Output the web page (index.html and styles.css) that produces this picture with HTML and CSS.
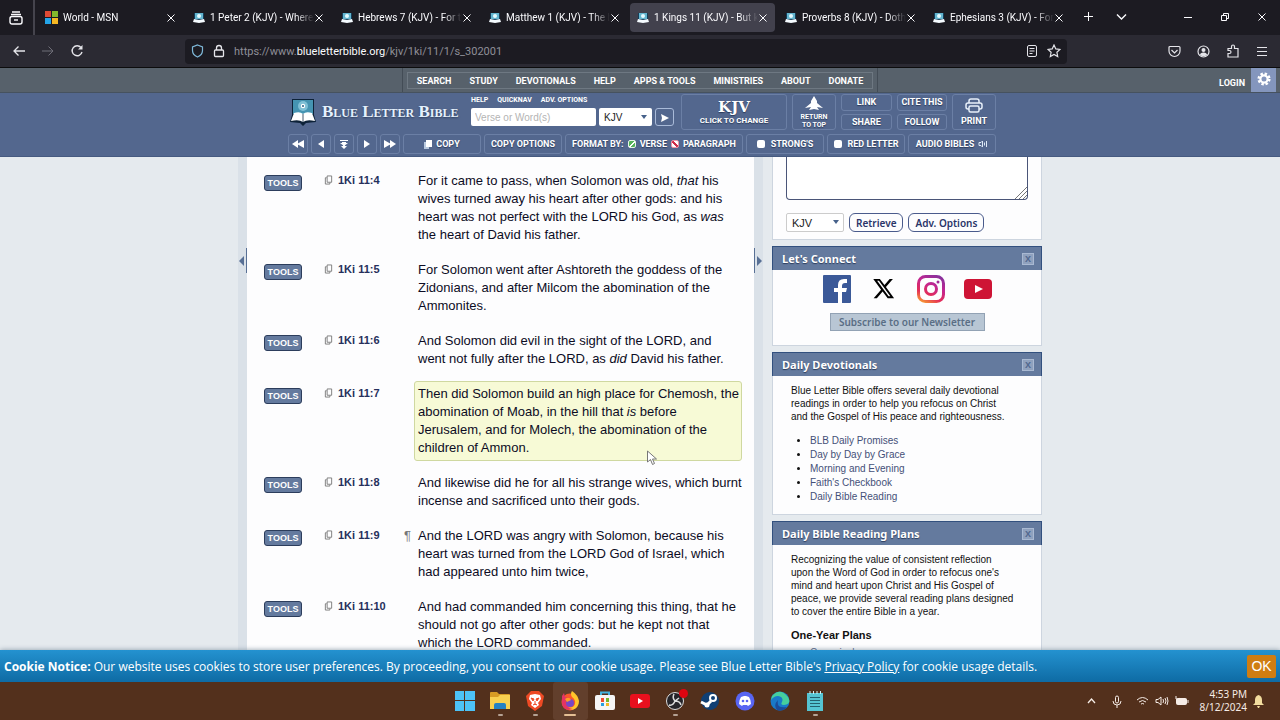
FILE: index.html
```
<!DOCTYPE html>
<html lang="en">
<head>
    <meta charset="utf-8">
    <title>1 Kings 11 (KJV)</title>
    <link rel="stylesheet" href="styles.css">
</head>
<body>
    <svg class="defs" aria-hidden="true">
        <symbol id="favicon" viewBox="0 0 12 12"><path fill="#153d58" d="M1 1h10v7H1z"/><path fill="#63b5cf" d="M2 1h8v6H2z"/><circle cx="6" cy="4" r="2" fill="#e5fbff"/><path fill="#f5fbff" d="M1 7l5 1 5-1 1 3-6 1-6-1z"/></symbol>
        <symbol id="close" viewBox="0 0 10 10"><path d="M1.500 1.500l7 7m0-7l-7 7" fill="none" stroke="currentColor"/></symbol>
        <symbol id="copy" viewBox="0 0 10 10"><path d="M3.500.500h5v7h-5zM3 2.500H1.500v7h5V8" fill="none" stroke="currentColor"/></symbol>
    </svg>

    <div class="tabbar">
        <button class="view-btn" aria-label="Firefox View"><svg width="14" height="14" viewBox="0 0 14 14" fill="none" stroke="currentColor" stroke-width="1.400"><path d="M3 1h8M2 3.500h10"/><rect x="1" y="5.500" width="12" height="7.500" rx="2"/><path d="M5 9h4"/></svg></button>
        <div class="tabs">
            <button class="tab"><svg width="13" height="13" viewBox="0 0 13 13"><path fill="#dd4b35" d="M0 0h6v6H0z"/><path fill="#83b92c" d="M7 0h6v6H7z"/><path fill="#24a4e8" d="M0 7h6v6H0z"/><path fill="#f5b824" d="M7 7h6v6H7z"/></svg><span>World - MSN</span><svg class="x"><use href="#close"/></svg></button>
            <button class="tab"><svg class="fav"><use href="#favicon"/></svg><span>1 Peter 2 (KJV) - Wheref</span><svg class="x"><use href="#close"/></svg></button>
            <button class="tab"><svg class="fav"><use href="#favicon"/></svg><span>Hebrews 7 (KJV) - For th</span><svg class="x"><use href="#close"/></svg></button>
            <button class="tab"><svg class="fav"><use href="#favicon"/></svg><span>Matthew 1 (KJV) - The b</span><svg class="x"><use href="#close"/></svg></button>
            <button class="tab active"><svg class="fav"><use href="#favicon"/></svg><span>1 Kings 11 (KJV) - But ki</span><svg class="x"><use href="#close"/></svg></button>
            <button class="tab"><svg class="fav"><use href="#favicon"/></svg><span>Proverbs 8 (KJV) - Doth</span><svg class="x"><use href="#close"/></svg></button>
            <button class="tab"><svg class="fav"><use href="#favicon"/></svg><span>Ephesians 3 (KJV) - For t</span><svg class="x"><use href="#close"/></svg></button>
        </div>
        <button class="tab-tool" aria-label="New tab"><svg width="11" height="11" viewBox="0 0 11 11"><path d="M5.500 1v9M1 5.500h9" stroke="currentColor"/></svg></button>
        <button class="tab-tool" aria-label="List tabs"><svg width="11" height="11" viewBox="0 0 11 11"><path d="M1 3.500L5.500 8 10 3.500" fill="none" stroke="currentColor" stroke-width="1.400"/></svg></button>
        <div class="window-btns">
            <button aria-label="Minimize"><svg width="10" height="10"><path d="M1 5.500h8" stroke="currentColor"/></svg></button>
            <button aria-label="Restore"><svg width="10" height="10" fill="none" stroke="currentColor"><path d="M1.500 3.500h5v5h-5zM3.500 3V1.500h5v5H7"/></svg></button>
            <button aria-label="Close"><svg width="10" height="10"><use href="#close"/></svg></button>
        </div>
    </div>

    <div class="navbar">
        <div class="nav-btns">
            <button aria-label="Back"><svg width="14" height="14" viewBox="0 0 14 14" fill="none" stroke="currentColor" stroke-width="1.300"><path d="M13 7H2M6.500 2.500L2 7l4.500 4.500"/></svg></button>
            <button aria-label="Forward" disabled><svg width="14" height="14" viewBox="0 0 14 14" fill="none" stroke="currentColor"><path d="M1 7h11M7.500 2.500L12 7l-4.500 4.500"/></svg></button>
            <button aria-label="Reload"><svg width="14" height="14" viewBox="0 0 14 14" fill="none" stroke="currentColor" stroke-width="1.400"><path d="M11 3.500A5 5 0 1 0 12 8"/><path d="M12.500 1v4.500H8z" fill="currentColor" stroke="none"/></svg></button>
        </div>
        <div class="urlbar">
            <svg width="13" height="14" viewBox="0 0 13 14" fill="none" stroke="#7eb8d8" stroke-width="1.200"><path d="M6.500 1l5 2v3.500c0 3-2 5.200-5 6.500-3-1.300-5-3.500-5-6.500V3z"/></svg>
            <svg width="12" height="14" viewBox="0 0 12 14" fill="none" stroke="#e5e5ea" stroke-width="1.300"><rect x="1.500" y="6" width="9" height="6.500" rx="1"/><path d="M3.500 6V4a2.500 2.500 0 0 1 5 0v2"/></svg>
            <div class="url" role="textbox" aria-label="Address" contenteditable="true" spellcheck="false">https://www.<b>blueletterbible.org</b>/kjv/1ki/11/1/s_302001</div>
            <svg width="12" height="14" viewBox="0 0 12 14" fill="none" stroke="#e5e5ea"><rect x="1.500" y="1.500" width="9" height="11" rx="1.500"/><path d="M3.500 4.500h5M3.500 7h5M3.500 9.500h3"/></svg>
            <svg width="14" height="14" viewBox="0 0 14 14" fill="none" stroke="#e5e5ea" stroke-width="1.200"><path d="M7 1l1.800 3.900 4.200.5-3.100 2.900.8 4.200L7 10.400l-3.700 2.100.8-4.200L1 5.400l4.200-.5z"/></svg>
        </div>
        <div class="nav-tools">
            <button aria-label="Pocket"><svg width="13" height="13" viewBox="0 0 13 13" fill="none" stroke="currentColor" stroke-width="1.200"><path d="M1 2.500q0-1 1-1h9q1 0 1 1V6a5.500 5.500 0 0 1-11 0zM3.500 5l3 3 3-3"/></svg></button>
            <button aria-label="Account"><svg width="13" height="13" viewBox="0 0 13 13"><circle cx="6.500" cy="6.500" r="5.500" fill="none" stroke="currentColor" stroke-width="1.200"/><circle cx="6.500" cy="5" r="2" fill="currentColor"/><path d="M3 10q0-2.500 3.500-2.500T10 10q-3.500 2.500-7 0" fill="currentColor"/></svg></button>
            <button aria-label="Extensions"><svg width="13" height="14" viewBox="0 0 13 14" fill="none" stroke="currentColor" stroke-width="1.200"><path d="M2 13V9.500h1.500a1.300 1.300 0 0 0 0-3H2V4.500h3.500V2.500a1.500 1.500 0 0 1 3 0v2H12V13z"/></svg></button>
            <button aria-label="Menu"><svg width="12" height="12"><path d="M1 2.500h10M1 6.500h10M1 10.500h10" stroke="currentColor"/></svg></button>
        </div>
    </div>

    <nav class="site-menu">
        <div class="menu-frame">
            <div class="menu">
                <a href="#">SEARCH</a><a href="#">STUDY</a><a href="#">DEVOTIONALS</a><a href="#">HELP</a><a href="#">APPS &amp; TOOLS</a><a href="#">MINISTRIES</a><a href="#">ABOUT</a><a href="#">DONATE</a>
            </div>
        </div>
        <div class="account">
            <a href="#">LOGIN</a>
            <button class="gear" aria-label="Settings"><svg width="14" height="14" viewBox="0 0 14 14"><circle cx="7" cy="7" r="5.300" fill="none" stroke="#fff" stroke-width="2.500" stroke-dasharray="2.400 1.760"/><circle cx="7" cy="7" r="3.600" fill="none" stroke="#fff" stroke-width="2.200"/></svg></button>
        </div>
    </nav>

    <header class="header">
        <div class="header-top">
            <a class="logo" href="#">
                <svg width="26" height="28" viewBox="0 0 26 28"><path fill="#0d2238" d="M2 1h22v16l2 7-10 1-3 3-3-3-10-1 2-7z"/><path fill="#4594b2" d="M3 2h20v14H3z"/><circle cx="13" cy="8" r="5" fill="#7fc0d6"/><circle cx="13" cy="8" r="2.200" fill="#fff"/><circle cx="13" cy="8" r="1" fill="#245f85"/><path fill="#fff" d="M4 15q6-2 9 1 3-3 9-1l3 8q-8-2-12 1-4-3-12-1z"/><path d="M13 16v8" stroke="#44586c"/></svg>
                <span>Blue Letter Bible</span>
            </a>
            <form class="search">
                <div class="search-links"><a href="#">HELP</a><a href="#">QUICKNAV</a><a href="#">ADV. OPTIONS</a></div>
                <div class="search-row">
                    <input type="text" aria-label="Verse or words" placeholder="Verse or Word(s)">
                    <span class="select-wrap"><select aria-label="Version"><option>KJV</option></select></span>
                    <button class="go" type="button" aria-label="Go"><svg width="8" height="8"><path fill="#fff" d="M0 0l8 4-8 4 1-4z"/></svg></button>
                </div>
            </form>
            <button class="hbtn version"><strong>KJV</strong>CLICK TO CHANGE</button>
            <button class="hbtn return"><svg width="18" height="15" viewBox="0 0 18 15"><path fill="#fff" d="M9 0l3 5v2l6 5-6-1 2 3-5-1-5 1 2-3-6 1 6-5V5z"/></svg>RETURN<br>TO TOP</button>
            <div class="stack link"><button class="hbtn">LINK</button><button class="hbtn">SHARE</button></div>
            <div class="stack cite"><button class="hbtn">CITE THIS</button><button class="hbtn">FOLLOW</button></div>
            <button class="hbtn print"><svg width="18" height="16" viewBox="0 0 18 16" fill="none" stroke="#e8f0fa" stroke-width="1.500"><path d="M4 5V3q0-2 2-2h6q2 0 2 2v2M4 11H3q-2 0-2-2V7q0-2 2-2h12q2 0 2 2v2q0 2-2 2h-1"/><rect x="4" y="8" width="10" height="6" rx="1.500"/></svg>PRINT</button>
        </div>
        <div class="header-bottom">
            <button class="hbtn" aria-label="Previous book"><svg width="12" height="8"><path fill="#fff" d="M6 0v8L0 4zM12 0v8L5 4z"/></svg></button>
            <button class="hbtn" aria-label="Previous chapter"><svg width="6" height="8"><path fill="#fff" d="M6 0v8L0 4z"/></svg></button>
            <button class="hbtn" aria-label="Choose chapter"><svg width="8" height="9"><path fill="#fff" d="M0 0h8v1H0zM2 2h4v1h2L4 6 0 3h2zM3 5h2v1h2L4 9 1 6h2z"/></svg></button>
            <button class="hbtn" aria-label="Next chapter"><svg width="6" height="8"><path fill="#fff" d="M0 0v8l6-4z"/></svg></button>
            <button class="hbtn" aria-label="Next book"><svg width="12" height="8"><path fill="#fff" d="M0 0v8l7-4zM6 0v8l6-4z"/></svg></button>
            <button class="hbtn"><svg width="8" height="9"><path fill="#b9c9de" d="M0 2h5v7H0z"/><path fill="#fff" d="M2 0h6v7H2z"/></svg>COPY</button>
            <button class="hbtn">COPY OPTIONS</button>
            <div class="hbtn format">FORMAT BY: <label><input class="verse-check" type="radio" name="format" checked>VERSE</label><label><input class="para-check" type="radio" name="format">PARAGRAPH</label></div>
            <label class="hbtn check"><input type="checkbox">STRONG'S</label>
            <label class="hbtn check"><input type="checkbox">RED LETTER</label>
            <button class="hbtn">AUDIO BIBLES <svg width="10" height="8" fill="none" stroke="#dce8f6"><path d="M1 2.500h2L4.500 1v6L3 5.500H1zM6.500 2.500v3M8.500 1v6"/></svg></button>
        </div>
    </header>

    <main class="page">
        <div class="gutter left"><button aria-label="Hide left column"><svg width="6" height="10"><path fill="#587095" d="M5 0v10L0 5z"/></svg></button></div>
        <section class="verses">
            <div class="verse"><button class="tools">TOOLS</button><a class="ref" href="#"><svg><use href="#copy"/></svg>1Ki 11:4</a><span class="pilcrow"></span><p>For it came to pass, when Solomon was old, <em>that</em> his wives turned away his heart after other gods: and his heart was not perfect with the LORD his God, as <em>was</em> the heart of David his father.</p></div>
            <div class="verse"><button class="tools">TOOLS</button><a class="ref" href="#"><svg><use href="#copy"/></svg>1Ki 11:5</a><span class="pilcrow"></span><p>For Solomon went after Ashtoreth the goddess of the Zidonians, and after Milcom the abomination of the Ammonites.</p></div>
            <div class="verse"><button class="tools">TOOLS</button><a class="ref" href="#"><svg><use href="#copy"/></svg>1Ki 11:6</a><span class="pilcrow"></span><p>And Solomon did evil in the sight of the LORD, and went not fully after the LORD, as <em>did</em> David his father.</p></div>
            <div class="verse current"><button class="tools">TOOLS</button><a class="ref" href="#"><svg><use href="#copy"/></svg>1Ki 11:7</a><span class="pilcrow"></span><p>Then did Solomon build an high place for Chemosh, the abomination of Moab, in the hill that <em>is</em> before Jerusalem, and for Molech, the abomination of the children of Ammon.<svg class="cursor" width="11" height="16" viewBox="0 0 11 16"><path fill="#fff" stroke="#777" d="M.500 1v11l3-2.500 2 5 2-1-2-4.500h4z"/></svg></p></div>
            <div class="verse"><button class="tools">TOOLS</button><a class="ref" href="#"><svg><use href="#copy"/></svg>1Ki 11:8</a><span class="pilcrow"></span><p class="keep">And likewise did he for all his strange wives, which burnt<br>incense and sacrificed unto their gods.</p></div>
            <div class="verse"><button class="tools">TOOLS</button><a class="ref" href="#"><svg><use href="#copy"/></svg>1Ki 11:9</a><span class="pilcrow">¶</span><p>And the LORD was angry with Solomon, because his heart was turned from the LORD God of Israel, which had appeared unto him twice,</p></div>
            <div class="verse"><button class="tools">TOOLS</button><a class="ref" href="#"><svg><use href="#copy"/></svg>1Ki 11:10</a><span class="pilcrow"></span><p>And had commanded him concerning this thing, that he should not go after other gods: but he kept not that which the LORD commanded.</p></div>
        </section>
        <div class="gutter right"><button aria-label="Hide right column"><svg width="6" height="10"><path fill="#587095" d="M1 0v10l5-5z"/></svg></button></div>
        <aside class="sidebar">
            <section class="card lookup">
                <div class="area"><textarea aria-label="Verses to retrieve"></textarea><svg class="grip" width="12" height="12"><path d="M0 12L12 0M4 12l8-8M8 12l4-4" stroke="#777"/></svg></div>
                <div class="lookup-row">
                    <span class="select-wrap"><select aria-label="Lookup version"><option>KJV</option></select></span>
                    <button>Retrieve</button>
                    <button>Adv. Options</button>
                </div>
            </section>
            <section class="card connect">
                <h2>Let's Connect<button aria-label="Close">X</button></h2>
                <div class="social">
                    <a href="#" aria-label="Facebook"><svg width="28" height="28"><path fill="#3b5998" d="M1 0h26q1 0 1 1v26q0 1-1 1H1q-1 0-1-1V1q0-1 1-1z"/><path fill="#fff" d="M15 28V17h-4v-4h4v-3q0-6 6-6h3v4h-2q-3 0-3 3v2h5l-1 4h-4v11z"/></svg></a>
                    <a href="#" aria-label="X"><svg width="22" height="22" viewBox="0 0 24 24"><path d="M18.200 1h3.500l-7.600 8.700L23 22h-7l-5.500-7.200L4.200 22H.700l8.100-9.300L.300 1h7.200l5 6.600zM17 20h1.900L6.500 3h-2z"/></svg></a>
                    <a href="#" aria-label="Instagram"><svg width="28" height="28" fill="none" stroke="url(#insta)" stroke-width="3"><defs><linearGradient id="insta" gradientUnits="userSpaceOnUse" x1="6" y1="28" x2="20" y2="0"><stop stop-color="#f79b33"/><stop offset=".3" stop-color="#e42d58"/><stop offset=".65" stop-color="#c22592"/><stop offset="1" stop-color="#87319c"/></linearGradient></defs><rect x="1.500" y="1.500" width="25" height="25" rx="7"/><circle cx="14" cy="14" r="5.500"/><circle cx="21" cy="7" r="1.500" fill="#a02897" stroke="none"/></svg></a>
                    <a href="#" aria-label="YouTube"><svg width="28" height="20"><rect width="28" height="20" rx="4" fill="#ce1435"/><path fill="#fff" d="M11 6v8l8-4z"/></svg></a>
                </div>
                <button class="subscribe">Subscribe to our Newsletter</button>
            </section>
            <section class="card devotionals">
                <h2>Daily Devotionals<button aria-label="Close">X</button></h2>
                <p>Blue Letter Bible offers several daily devotional readings in order to help you refocus on Christ and the Gospel of His peace and righteousness.</p>
                <ul>
                    <li><a href="#">BLB Daily Promises</a></li>
                    <li><a href="#">Day by Day by Grace</a></li>
                    <li><a href="#">Morning and Evening</a></li>
                    <li><a href="#">Faith's Checkbook</a></li>
                    <li><a href="#">Daily Bible Reading</a></li>
                </ul>
            </section>
            <section class="card plans">
                <h2>Daily Bible Reading Plans<button aria-label="Close">X</button></h2>
                <p>Recognizing the value of consistent reflection upon the Word of God in order to refocus one's mind and heart upon Christ and His Gospel of peace, we provide several reading plans designed to cover the entire Bible in a year.</p>
                <h3>One-Year Plans</h3>
                <ul><li><a href="#">Canonical</a></li></ul>
            </section>
        </aside>
    </main>

    <div class="cookie">
        <div><b>Cookie Notice:</b> Our website uses cookies to store user preferences. By proceeding, you consent to our cookie usage. Please see Blue Letter Bible's <a href="#">Privacy Policy</a> for cookie usage details.</div>
        <button>OK</button>
    </div>

    <footer class="taskbar">
        <div class="apps">
            <button class="app" aria-label="Start"><svg width="20" height="20"><path fill="#4dc3f7" d="M0 0h9v9H0zM10 0h10v9H10zM0 10h9v10H0zM10 10h10v10H10z"/></svg></button>
            <button class="app running" aria-label="File Explorer"><svg width="20" height="20"><path fill="#d79b24" d="M0 2q0-1 1-1h6l2 2h10q1 0 1 1v5H0z"/><path fill="#f8d050" d="M0 6h8l2-2h10v14H0z"/><path fill="#2381c5" d="M4 18v-4q0-2 2-2h8q2 0 2 2v4z"/></svg></button>
            <button class="app running" aria-label="Brave"><svg width="18" height="20"><path fill="#ee4a24" d="M5 0h8l3 3 2 2-2 10-7 5-7-5L0 5l2-2z"/><path fill="#fff" d="M4 4l5-1 5 1 1 4-3 4 1 2-4 3-4-3 1-2-3-4z"/><path d="M5 7l3 1-1 2zM13 7l-3 1 1 2zM9 10v3M7 14l2-1 2 1" fill="#ee4a24" stroke="#ee4a24"/></svg></button>
            <button class="app focused" aria-label="Firefox"><svg width="20" height="20"><circle cx="10" cy="11" r="8.500" fill="#f9572c"/><path fill="#ffc52b" d="M12 0q6 4 7 10 0 7-7 9-4 0-5-3 6 2 8-3 1-4-3-7-2-3 0-6z"/><path fill="#e33464" d="M2 5l2-3 1 4 4 1-3 3q0 7 7 8-9 3-11-5z"/><circle cx="10" cy="12" r="4" fill="#7747c6"/><path fill="#ff9c25" d="M5 8q4-3 6 1l-4 2z"/></svg></button>
            <button class="app" aria-label="Microsoft Store"><svg width="20" height="20"><path d="M6 5V1.500h8V5" fill="none" stroke="#43b3df" stroke-width="2"/><rect y="4" width="20" height="15" rx="2" fill="#f5f5f5"/><path fill="#ed4d31" d="M6 7h3v4H6z"/><path fill="#75b82f" d="M11 7h3v4h-3z"/><path fill="#279fe1" d="M6 12h3v3H6z"/><path fill="#f1b922" d="M11 12h3v3h-3z"/></svg></button>
            <button class="app" aria-label="YouTube"><svg width="20" height="14"><rect width="20" height="14" rx="3" fill="#e8101d"/><path fill="#fff" d="M8 4v6l5-3z"/></svg></button>
            <button class="app running" aria-label="OBS Studio"><svg width="20" height="20"><circle cx="10" cy="10" r="8.500" fill="#26252a" stroke="#ddd"/><path d="M9 3q-2 4 1 7 5 0 6 4M10 10q-2 5-6 4M10 10l4-3" fill="none" stroke="#ddd" stroke-width="1.500"/></svg><i class="badge"></i></button>
            <button class="app" aria-label="Steam"><svg width="20" height="20"><circle cx="10" cy="10" r="9" fill="#103f74"/><circle cx="13" cy="7" r="3" fill="none" stroke="#fff" stroke-width="2"/><path d="M1 11l6 3 4-4" stroke="#fff" stroke-width="3" fill="none"/><circle cx="7" cy="14" r="2.500" fill="#fff"/></svg></button>
            <button class="app" aria-label="Discord"><svg width="20" height="20"><circle cx="10" cy="10" r="9.500" fill="#5865f2"/><path fill="#fff" d="M6 6l3-1h2l3 1q2 3 2 7l-3 2-1-1H8l-1 1-3-2q0-4 2-7z"/><circle cx="8" cy="10" r="1.300" fill="#5865f2"/><circle cx="12" cy="10" r="1.300" fill="#5865f2"/></svg></button>
            <button class="app" aria-label="Edge"><svg width="20" height="20"><circle cx="10" cy="10" r="9.500" fill="#1979c9"/><path fill="#46ce9d" d="M2 5q8-9 16 1 4 7-4 8-4 0-2-3 2-5-4-6-4 0-7 4z"/><path fill="#1b4b99" d="M8 9q-2 9 9 7-4 5-10 3-4-5 1-10z"/></svg></button>
            <button class="app running" aria-label="Notepad"><svg width="16" height="20"><path fill="#55c4d2" d="M0 2h16v18H0z"/><path d="M3 0v3M6.500 0v3M10 0v3M13.500 0v3" stroke="#d3f1f4"/><path d="M3 6.500h10M3 9.500h10M3 12.500h10M3 15.500h10" stroke="#24606e"/></svg></button>
        </div>
        <div class="tray">
            <svg class="caret" width="9" height="6"><path d="M1 5l3.500-4L8 5" fill="none" stroke="currentColor" stroke-width="1.300"/></svg>
            <svg class="mic" width="10" height="13" fill="none" stroke="currentColor"><rect x="3.500" y="1" width="3" height="7" rx="1.500"/><path d="M1 6q0 4 4 4t4-4M5 10v3"/></svg>
            <svg width="13" height="10" fill="none" stroke="currentColor"><path d="M1 4q5.500-5 11 0M3 6q3.500-3 7 0M5 8q1.500-1 3 0"/></svg>
            <svg width="14" height="10" fill="none" stroke="currentColor"><path d="M1 3.500h2L6 1v8L3 6.500H1zM8 3q1 2 0 4M10 2q2 3 0 6M12 1q2 4 0 8"/></svg>
            <svg width="14" height="10"><rect x="1.500" y="2.500" width="10" height="6" rx="1" fill="currentColor" stroke="currentColor"/><path d="M13 4v3M1 0v3q2 2 4-1" fill="none" stroke="currentColor"/></svg>
            <time>4:53 PM<br>8/12/2024</time>
            <svg class="bell" width="11" height="13"><path fill="#f2dc9e" d="M2 5q0-4 3.500-5Q9 1 9 5v3l2 2H0l2-2zM4 11h3l-1 2H5z"/></svg>
        </div>
    </footer>
</body>
</html>
```
FILE: styles.css
```
* {
    box-sizing: border-box;
}
body {
    margin: 0;
    height: 100vh;
    overflow: hidden;
    display: flex;
    flex-direction: column;
    font-family: "Liberation Sans", Arial, sans-serif;
    background-color: #e5eaee;
}
button {
    font-family: inherit;
    border: none;
    background: none;
    color: inherit;
    padding: 0;
    cursor: pointer;
}
a {
    color: inherit;
    text-decoration: none;
}
svg {
    flex: none;
}
.defs {
    position: absolute;
    width: 0;
    height: 0;
}

/* browser tabs */
.tabbar {
    height: 35px;
    flex: none;
    display: flex;
    align-items: center;
    background-color: #1c1b22;
    color: #fbfbfe;
}
.view-btn {
    width: 35px;
    height: 35px;
    padding-right: 2px;
    border-right: 2px solid #45444d;
    display: flex;
    align-items: center;
    justify-content: center;
}
.tabs {
    display: flex;
    gap: 3px;
    margin-left: 3px;
}
.tab {
    width: 145px;
    height: 29px;
    padding: 0 7px;
    border-radius: 4px;
    display: flex;
    align-items: center;
    gap: 5px;
    font-family: Roboto, sans-serif;
    font-size: 10px;
}
.tab.active {
    background-color: #42414d;
}
.tab span {
    flex: 1;
    text-align: left;
    white-space: nowrap;
    overflow: hidden;
    mask-image: linear-gradient(to right, #000 82%, transparent);
}
.fav {
    width: 12px;
    height: 12px;
}
.x {
    width: 10px;
    height: 10px;
    margin-left: -5px;
}
.tab-tool {
    width: 32px;
    height: 29px;
    margin-left: 1px;
}
.window-btns {
    margin-left: auto;
    display: flex;
}
.window-btns button {
    width: 37px;
    height: 35px;
}

/* address row */
.navbar {
    height: 33px;
    flex: none;
    display: flex;
    align-items: center;
    justify-content: space-between;
    background-color: #2b2a33;
    border-bottom: 1px solid #0c0c0d;
    color: #e5e5ea;
}
.nav-btns {
    width: 185px;
    padding-left: 4px;
    display: flex;
}
.nav-btns button, .nav-tools button {
    width: 29px;
    height: 28px;
    display: flex;
    align-items: center;
    justify-content: center;
}
.nav-btns button:disabled {
    color: #6f6e78;
}
.urlbar {
    flex: 1;
    height: 25px;
    padding: 0 6px;
    display: flex;
    align-items: center;
    gap: 9px;
    border-radius: 4px;
    background-color: #1c1b22;
}
.url {
    flex: 1;
    font-family: Roboto, sans-serif;
    font-size: 11px;
    color: #8f8f98;
}
.url b {
    font-weight: 400;
    color: #fbfbfe;
}
.nav-tools {
    width: 213px;
    padding-right: 4px;
    display: flex;
    justify-content: flex-end;
}

/* grey site menu */
.site-menu {
    height: 25px;
    flex: none;
    display: flex;
    justify-content: center;
    position: relative;
    background-color: #57616b;
    border-bottom: 1px solid #46525f;
    color: #fff;
    font-family: Roboto, sans-serif;
    font-size: 9px;
    font-weight: bold;
}
.menu-frame {
    padding: 4px 4px 3px;
    border: 1px solid #434c56;
    border-width: 0 1px;
}
.menu {
    height: 17px;
    display: flex;
    align-items: center;
    border: 1px solid #6e7882;
}
.menu a {
    padding: 0 9px;
}
.account {
    position: absolute;
    top: 0;
    right: 4px;
    height: 24px;
    display: flex;
    gap: 6px;
}
.account a {
    padding-top: 10px;
}
.gear {
    width: 25px;
    height: 24px;
    background-color: #8496bd;
}

/* blue header */
.header {
    height: 64px;
    flex: none;
    padding: 1px 0 2px 4px;
    display: flex;
    flex-direction: column;
    align-items: center;
    gap: 4px;
    background-color: #53678e;
    border-bottom: 1px solid #465a80;
    color: #fff;
    font-family: Roboto, sans-serif;
    font-size: 9px;
    font-weight: bold;
}
.header-top, .header-bottom {
    width: 708px;
    display: flex;
}
.header-top {
    height: 36px;
    gap: 5px;
}
.header-bottom {
    height: 20px;
    gap: 3px;
}
.hbtn {
    display: flex;
    align-items: center;
    justify-content: center;
    border: 1px solid #6b7fa5;
    border-radius: 3px;
    font-size: 9px;
    font-weight: bold;
    text-shadow: 0 1px 1px #2c3c5c;
    white-space: nowrap;
}
.logo {
    width: 178px;
    padding-left: 2px;
    display: flex;
    align-items: center;
    gap: 6px;
    font-family: "Liberation Serif", serif;
    font-size: 17px;
    font-variant: small-caps;
    white-space: nowrap;
    text-shadow: 0 1px 2px #2c3c5c;
    color: #e4f1fc;
}
.search {
    width: 205px;
}
.search-links {
    height: 14px;
    display: flex;
    gap: 9px;
    font-size: 7px;
    line-height: 12px;
}
.search-row {
    height: 18px;
    display: flex;
    gap: 3px;
}
.search-row input {
    width: 125px;
    padding: 0 4px;
    border: none;
    border-radius: 2px;
    font-family: "Liberation Sans", Arial, sans-serif;
    font-size: 10px;
}
.search-row input::placeholder {
    color: #b4b4b4;
}
.select-wrap {
    position: relative;
    display: flex;
}
.select-wrap::after {
    content: "";
    position: absolute;
    right: 5px;
    top: 7px;
    border: 3px solid transparent;
    border-top: 4px solid #46618a;
    pointer-events: none;
}
select {
    width: 53px;
    padding: 0 5px;
    appearance: none;
    border: none;
    border-radius: 2px;
    background-color: #fff;
    font-family: "Liberation Sans", Arial, sans-serif;
    font-size: 10px;
    color: #222;
}
.go {
    width: 19px;
    border: 1px solid #a9bad8;
    border-radius: 3px;
}
.version {
    width: 106px;
    flex-direction: column;
    font-size: 8px;
}
.version strong {
    font-family: "DejaVu Serif", serif;
    font-size: 15px;
    line-height: 17px;
}
.return {
    width: 44px;
    display: block;
    font-size: 7px;
    line-height: 8px;
}
.return svg {
    display: block;
    margin: 0 auto 2px;
}
.stack {
    display: flex;
    flex-direction: column;
    gap: 3px;
}
.stack .hbtn {
    flex: 1;
}
.link {
    width: 51px;
}
.cite {
    width: 50px;
}
.print {
    flex: 1;
    flex-direction: column;
    gap: 2px;
}
.header-bottom .hbtn {
    width: 20px;
    gap: 4px;
}
.header-bottom .hbtn:nth-child(n+6) {
    width: 78px;
}
.header-bottom .format.format {
    width: 178px;
}
.header-bottom .hbtn:last-child {
    flex: 1;
}
.format label {
    display: flex;
    align-items: center;
    gap: 4px;
}
.header-bottom input {
    appearance: none;
    width: 8px;
    height: 8px;
    margin: 0;
    border-radius: 2px;
    background-color: #fff;
}
.header-bottom .check input {
    margin-right: 2px;
}
.header-bottom .verse-check {
    border: 1px solid #e6f6e6;
    background: linear-gradient(135deg, #55b35a 45%, #fff 45% 60%, #55b35a 60%);
}
.header-bottom .para-check {
    border: 1px solid #e995a6;
    background: linear-gradient(45deg, #fff 35%, #cf2c4a 35% 65%, #fff 65%);
}

/* page body */
.page {
    flex: 1;
    min-height: 0;
    width: 804px;
    margin: 0 auto;
    display: flex;
    align-items: flex-start;
    overflow: hidden;
}
.gutter {
    width: 9px;
    height: 100%;
    flex: none;
    padding-top: 91px;
    background-color: #dae1e8;
}
.gutter button {
    width: 9px;
    height: 25px;
    display: flex;
    align-items: center;
    justify-content: center;
}
.gutter.left button {
    border-right: 1px solid #587095;
}
.gutter.right button {
    border-left: 1px solid #587095;
}
.verses {
    flex: 1;
    min-width: 0;
    height: 100%;
    padding: 11px 12px 0 17px;
    display: flex;
    flex-direction: column;
    gap: 9px;
    background-color: #fdfdfe;
}
.verse {
    display: grid;
    grid-template-columns: 60px 77px 13px minmax(0, 1fr);
    align-items: start;
}
.tools {
    width: 38px;
    height: 16px;
    margin-top: 7px;
    border: 1px solid #2c3d5c;
    border-radius: 3px;
    background-color: #647a9e;
    color: #fff;
    font-size: 9px;
    font-weight: bold;
}
.ref {
    display: flex;
    align-items: center;
    gap: 5px;
    margin-top: 3px;
    font-size: 11px;
    line-height: 18px;
    font-weight: bold;
    color: #26305c;
    white-space: nowrap;
}
.ref svg {
    width: 9px;
    height: 10px;
    color: #777;
}
.pilcrow {
    padding: 4px 0 0 3px;
    font-size: 13px;
    line-height: 18px;
    color: #777;
}
.verse p {
    position: relative;
    margin: 0;
    padding: 3px 0 3px 3px;
    border: 1px solid transparent;
    border-radius: 3px;
    font-size: 13px;
    line-height: 18px;
    color: #0c0c24;
}
.verse .keep {
    white-space: nowrap;
}
.current p {
    background-color: #f7fad6;
    border-color: #cfd8a0;
}
.cursor {
    position: absolute;
    left: 232px;
    top: 68px;
}

/* right column */
.sidebar {
    width: 270px;
    flex: none;
    margin-left: 9px;
    display: flex;
    flex-direction: column;
    gap: 6px;
}
.card {
    background-color: #fdfdfe;
    border: 1px solid #cdd5df;
    border-top: none;
    font-size: 10px;
    line-height: 13px;
    color: #111;
}
.card h2 {
    height: 24px;
    margin: 0 -1px;
    padding: 0 7px 0 9px;
    display: flex;
    align-items: center;
    justify-content: space-between;
    border: 1px solid #32507e;
    border-bottom: none;
    background-color: #647a9e;
    color: #fff;
    font-family: "Noto Sans", sans-serif;
    font-size: 11px;
    text-shadow: 0 1px 1px #2c3c5c;
}
.card h2 button {
    width: 12px;
    height: 12px;
    border: 1px solid #a9b9d2;
    background-color: #8fa1be;
    color: #536a90;
    font-size: 9px;
    line-height: 9px;
    font-weight: bold;
    text-shadow: none;
}
.card p {
    margin: 0 26px 0 18px;
}
.card h3 {
    margin: 11px 18px 0;
    font-size: 11px;
}
.card ul {
    margin: 0;
    padding-left: 37px;
    line-height: 14px;
}
.card ul a {
    color: #455078;
}
.lookup {
    height: 83px;
    padding: 0 13px;
}
.area {
    position: relative;
    height: 43px;
}
.area textarea {
    display: block;
    width: 100%;
    height: 43px;
    resize: none;
    border: 1px solid #4a5578;
    border-top: none;
    border-radius: 0 0 4px 4px;
}
.grip {
    position: absolute;
    right: 1px;
    bottom: 1px;
}
.lookup-row {
    display: flex;
    gap: 5px;
    margin-top: 13px;
    height: 19px;
}
.lookup-row select {
    width: 58px;
    border: 1px solid #ccc;
    font-size: 11px;
}
.lookup-row button {
    padding: 0 6px;
    border: 1px solid #4a5b8c;
    border-radius: 6px;
    color: #2a3568;
    font-family: "Noto Sans", sans-serif;
    font-size: 10px;
    font-weight: 600;
}
.connect {
    height: 100px;
    text-align: center;
}
.social {
    display: flex;
    align-items: center;
    justify-content: center;
    gap: 19px;
    height: 28px;
    margin: 5px 0 10px;
}
.social a {
    width: 28px;
    display: flex;
    justify-content: center;
}
.subscribe {
    width: 155px;
    height: 18px;
    border: 1px solid #92a2b4;
    background-color: #b8c6d4;
    color: #5a6e85;
    font-family: "Noto Sans", sans-serif;
    font-size: 10px;
    font-weight: 600;
}
.devotionals {
    height: 163px;
}
.devotionals p, .plans p {
    padding-top: 8px;
}
.devotionals ul {
    margin-top: 11px;
}
.plans ul {
    margin-top: 4px;
}

/* cookie banner */
.cookie {
    height: 32px;
    flex: none;
    padding: 0 4px;
    display: flex;
    align-items: center;
    justify-content: space-between;
    background: linear-gradient(#2492d0, #0e6ba4);
    box-shadow: 0 0 5px #8a9aa8;
    position: relative;
    color: #fff;
    font-family: "Open Sans", sans-serif;
    font-size: 12px;
}
.cookie a {
    text-decoration: underline;
}
.cookie button {
    width: 29px;
    height: 23px;
    border-radius: 2px;
    background-color: #cf7d12;
    font-family: "Liberation Sans", Arial, sans-serif;
    font-size: 14px;
}

/* windows taskbar */
.taskbar {
    height: 38px;
    flex: none;
    display: flex;
    justify-content: center;
    position: relative;
    background-color: #53301c;
    color: #f6ece6;
}
.apps {
    display: flex;
}
.app {
    width: 35px;
    height: 38px;
    padding-bottom: 1px;
    display: flex;
    align-items: center;
    justify-content: center;
    position: relative;
    border-radius: 3px;
}
.running::after, .focused::after {
    content: "";
    position: absolute;
    bottom: 4px;
    width: 5px;
    height: 2px;
    border-radius: 1px;
    background-color: #b5a294;
}
.focused {
    background-color: #623f2c;
}
.focused::after {
    width: 12px;
    background-color: #e4bf94;
}
.badge {
    position: absolute;
    top: 7px;
    right: 5px;
    width: 9px;
    height: 9px;
    border-radius: 50%;
    background-color: #e00510;
}
.tray {
    position: absolute;
    right: 16px;
    top: 0;
    height: 38px;
    display: flex;
    align-items: center;
    gap: 6px;
}
.caret {
    margin-right: 10px;
}
.mic {
    margin-right: 8px;
}
.tray time {
    width: 52px;
    text-align: right;
    font-family: "Noto Sans", sans-serif;
    font-size: 10px;
    line-height: 13px;
}
```
